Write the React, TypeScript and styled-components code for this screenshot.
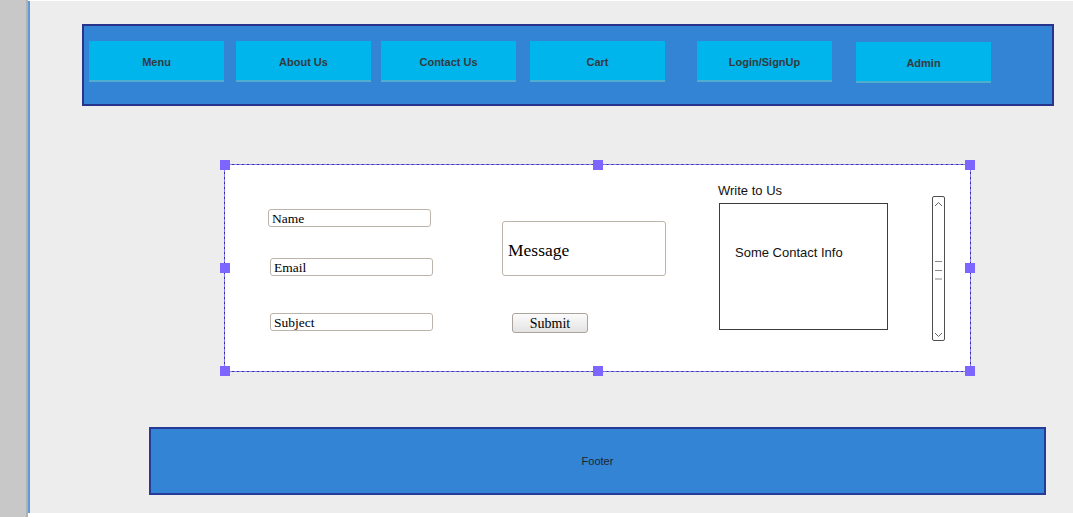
import styled, { createGlobalStyle } from "styled-components";

const GlobalStyle = createGlobalStyle`
  html, body {
    margin: 0;
    padding: 0;
    background: #ffffff;
  }
  body {
    font-family: "Liberation Sans", Arial, sans-serif;
  }
`;

const navItems = [
  { label: "Menu", gap: 0, drop: 0 },
  { label: "About Us", gap: 12, drop: 0 },
  { label: "Contact Us", gap: 10, drop: 0 },
  { label: "Cart", gap: 14, drop: 0 },
  { label: "Login/SignUp", gap: 32, drop: 0 },
  { label: "Admin", gap: 24, drop: 1 },
];

const handles = [
  [0, 0],
  [50, 0],
  [100, 0],
  [0, 50],
  [100, 50],
  [0, 100],
  [50, 100],
  [100, 100],
];

const ScrollGlyph = () => (
  <ScrollTrack>
    <svg width="9" height="6" viewBox="0 0 9 6">
      <path d="M1 5 L4.5 1.5 L8 5" fill="none" stroke="#666" strokeWidth="1" />
    </svg>
    <svg width="9" height="20" viewBox="0 0 9 20">
      <path d="M1 1.5 H8 M1 10.5 H8 M1 19 H8" stroke="#888" strokeWidth="1.2" />
    </svg>
    <svg width="9" height="6" viewBox="0 0 9 6">
      <path d="M1 1 L4.5 4.5 L8 1" fill="none" stroke="#666" strokeWidth="1" />
    </svg>
  </ScrollTrack>
);

export default function App() {
  return (
    <>
      <GlobalStyle />
      <Page>
        <SideStrip />
        <Canvas>
          <Header>
            {navItems.map((item) => (
              <NavButton key={item.label} $gap={item.gap} $drop={item.drop}>
                {item.label}
              </NavButton>
            ))}
          </Header>

          <Panel>
            <FieldColumn>
              <Field $shift={0} $top={0} defaultValue="Name" />
              <Field $shift={2} $top={31} defaultValue="Email" />
              <Field $shift={2} $top={37} defaultValue="Subject" />
            </FieldColumn>

            <MessageColumn>
              <MessageBox>Message</MessageBox>
              <SubmitButton type="button">Submit</SubmitButton>
            </MessageColumn>

            <InfoColumn>
              <InfoTitle>Write to Us</InfoTitle>
              <InfoBox>Some Contact Info</InfoBox>
            </InfoColumn>

            <ScrollGlyph />

            <Selection>
              {handles.map(([x, y]) => (
                <Handle key={`${x}-${y}`} $x={x} $y={y} />
              ))}
            </Selection>
          </Panel>

          <Footer>Footer</Footer>
        </Canvas>
      </Page>
    </>
  );
}

const Page = styled.div`
  display: flex;
  width: 1073px;
  height: 517px;
  overflow: hidden;
`;

const SideStrip = styled.div`
  width: 26px;
  flex-shrink: 0;
  background: #c8c8c8;
  border-right: 2px solid #b2b2b2;
`;

const Canvas = styled.div`
  flex: 1;
  display: flex;
  flex-direction: column;
  align-items: flex-start;
  margin: 1px 0 4px;
  background: #ededed;
  border-left: 2px solid #5d9ad8;
`;

const Header = styled.div`
  box-sizing: border-box;
  display: flex;
  align-items: flex-start;
  width: 972px;
  height: 82px;
  margin: 23px 0 0 52px;
  padding: 15px 0 0 5px;
  background: #3384d4;
  border: 2px solid #28338c;
`;

const NavButton = styled.div<{ $gap: number; $drop: number }>`
  box-sizing: border-box;
  display: flex;
  align-items: center;
  justify-content: center;
  width: 135px;
  height: 41px;
  margin-left: ${(p) => p.$gap}px;
  margin-top: ${(p) => p.$drop}px;
  padding-top: ${(p) => 2 + p.$drop}px;
  background: #00b5ec;
  border-bottom: 2px solid #4fadce;
  color: #333a40;
  font-family: "Liberation Sans", Arial, sans-serif;
  font-size: 11px;
  font-weight: bold;
`;

const Panel = styled.div`
  position: relative;
  box-sizing: border-box;
  display: flex;
  align-items: flex-start;
  width: 747px;
  height: 208px;
  margin: 58px 0 0 194px;
  background: #ffffff;
  border: 1px solid #34348a;
`;

const FieldColumn = styled.div`
  display: flex;
  flex-direction: column;
  width: 165px;
  margin-left: 43px;
  padding-top: 44px;
`;

const Field = styled.input<{ $shift: number; $top: number }>`
  box-sizing: border-box;
  width: 163px;
  height: 18px;
  margin: ${(p) => p.$top}px 0 0 ${(p) => p.$shift}px;
  padding: 1px 3px 0;
  background: #ffffff;
  border: 1px solid #bcb4aa;
  border-radius: 3px;
  color: #000;
  font-family: "Liberation Serif", "Times New Roman", serif;
  font-size: 13.5px;
  outline: none;
`;

const MessageColumn = styled.div`
  display: flex;
  flex-direction: column;
  align-items: flex-start;
  margin-left: 69px;
  padding-top: 56px;
`;

const MessageBox = styled.div`
  box-sizing: border-box;
  display: flex;
  align-items: center;
  width: 164px;
  height: 55px;
  padding: 3px 0 0 5px;
  border: 1px solid #bcb4aa;
  border-radius: 3px;
  color: #000;
  font-family: "Liberation Serif", "Times New Roman", serif;
  font-size: 17.5px;
`;

const SubmitButton = styled.button`
  box-sizing: border-box;
  width: 76px;
  height: 20px;
  margin: 37px 0 0 10px;
  padding: 2px 0 0;
  background: linear-gradient(#fbfbfb, #e3e3e3);
  border: 1px solid #aaa49c;
  border-radius: 3px;
  color: #000;
  font-family: "Liberation Serif", "Times New Roman", serif;
  font-size: 14px;
  line-height: 16px;
`;

const InfoColumn = styled.div`
  display: flex;
  flex-direction: column;
  align-items: flex-start;
  margin-left: 52px;
  padding-top: 18px;
`;

const InfoTitle = styled.div`
  color: #111;
  font-family: "Liberation Sans", Arial, sans-serif;
  font-size: 13px;
  line-height: 15px;
`;

const InfoBox = styled.div`
  box-sizing: border-box;
  width: 169px;
  height: 127px;
  margin: 5px 0 0 1px;
  padding: 41px 0 0 15px;
  border: 1px solid #3c3c3c;
  color: #111;
  font-family: "Liberation Sans", Arial, sans-serif;
  font-size: 13px;
`;

const ScrollTrack = styled.div`
  box-sizing: border-box;
  display: flex;
  flex-direction: column;
  align-items: center;
  justify-content: space-between;
  width: 13px;
  height: 145px;
  margin: 31px 0 0 44px;
  padding: 4px 0 2px;
  border: 1px solid #505050;
  border-radius: 2px;
  background: #ffffff;
`;

const Selection = styled.div`
  position: absolute;
  inset: -1px;
  border: 1px dashed #8a7cff;
  pointer-events: none;
`;

const Handle = styled.div<{ $x: number; $y: number }>`
  position: absolute;
  left: calc(${(p) => p.$x}% - 5px);
  top: calc(${(p) => p.$y}% - 5px);
  width: 10px;
  height: 10px;
  background: #7d66ff;
`;

const Footer = styled.div`
  box-sizing: border-box;
  display: flex;
  align-items: center;
  justify-content: center;
  width: 897px;
  height: 68px;
  margin: 55px 0 0 119px;
  background: #3384d4;
  border: 2px solid #263b98;
  color: #1c2430;
  font-family: "Liberation Sans", Arial, sans-serif;
  font-size: 11px;
`;
